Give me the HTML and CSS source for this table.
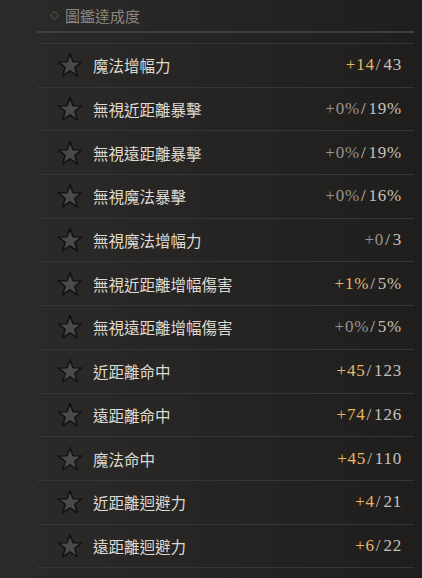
FILE: index.html
```html
<!DOCTYPE html>
<html lang="zh-Hant">
<head>
<meta charset="utf-8">
<link rel="stylesheet" href="styles.css">
</head>
<body>
<div class="panel">
  <div class="header"><span class="diamond">◇</span><span class="title">圖鑑達成度</span></div>
  <ul class="list">
    <li class="row"><svg class="star" viewBox="0 0 24 24"><polygon points="12,1.5 14.8,9 22.8,9.2 16.5,14.2 18.7,22 12,17.4 5.3,22 7.5,14.2 1.2,9.2 9.2,9"/></svg><span class="name">魔法增幅力</span><span class="val"><span class="gain">+14</span><span class="sl">/</span><span class="tot">43</span></span></li>
    <li class="row"><svg class="star" viewBox="0 0 24 24"><polygon points="12,1.5 14.8,9 22.8,9.2 16.5,14.2 18.7,22 12,17.4 5.3,22 7.5,14.2 1.2,9.2 9.2,9"/></svg><span class="name">無視近距離暴擊</span><span class="val"><span class="zero">+0%</span><span class="sl">/</span><span class="tot">19%</span></span></li>
    <li class="row"><svg class="star" viewBox="0 0 24 24"><polygon points="12,1.5 14.8,9 22.8,9.2 16.5,14.2 18.7,22 12,17.4 5.3,22 7.5,14.2 1.2,9.2 9.2,9"/></svg><span class="name">無視遠距離暴擊</span><span class="val"><span class="zero">+0%</span><span class="sl">/</span><span class="tot">19%</span></span></li>
    <li class="row"><svg class="star" viewBox="0 0 24 24"><polygon points="12,1.5 14.8,9 22.8,9.2 16.5,14.2 18.7,22 12,17.4 5.3,22 7.5,14.2 1.2,9.2 9.2,9"/></svg><span class="name">無視魔法暴擊</span><span class="val"><span class="zero">+0%</span><span class="sl">/</span><span class="tot">16%</span></span></li>
    <li class="row"><svg class="star" viewBox="0 0 24 24"><polygon points="12,1.5 14.8,9 22.8,9.2 16.5,14.2 18.7,22 12,17.4 5.3,22 7.5,14.2 1.2,9.2 9.2,9"/></svg><span class="name">無視魔法增幅力</span><span class="val"><span class="zero">+0</span><span class="sl">/</span><span class="tot">3</span></span></li>
    <li class="row"><svg class="star" viewBox="0 0 24 24"><polygon points="12,1.5 14.8,9 22.8,9.2 16.5,14.2 18.7,22 12,17.4 5.3,22 7.5,14.2 1.2,9.2 9.2,9"/></svg><span class="name">無視近距離增幅傷害</span><span class="val"><span class="gain">+1%</span><span class="sl">/</span><span class="tot">5%</span></span></li>
    <li class="row"><svg class="star" viewBox="0 0 24 24"><polygon points="12,1.5 14.8,9 22.8,9.2 16.5,14.2 18.7,22 12,17.4 5.3,22 7.5,14.2 1.2,9.2 9.2,9"/></svg><span class="name">無視遠距離增幅傷害</span><span class="val"><span class="zero">+0%</span><span class="sl">/</span><span class="tot">5%</span></span></li>
    <li class="row"><svg class="star" viewBox="0 0 24 24"><polygon points="12,1.5 14.8,9 22.8,9.2 16.5,14.2 18.7,22 12,17.4 5.3,22 7.5,14.2 1.2,9.2 9.2,9"/></svg><span class="name">近距離命中</span><span class="val"><span class="gain">+45</span><span class="sl">/</span><span class="tot">123</span></span></li>
    <li class="row"><svg class="star" viewBox="0 0 24 24"><polygon points="12,1.5 14.8,9 22.8,9.2 16.5,14.2 18.7,22 12,17.4 5.3,22 7.5,14.2 1.2,9.2 9.2,9"/></svg><span class="name">遠距離命中</span><span class="val"><span class="gain">+74</span><span class="sl">/</span><span class="tot">126</span></span></li>
    <li class="row"><svg class="star" viewBox="0 0 24 24"><polygon points="12,1.5 14.8,9 22.8,9.2 16.5,14.2 18.7,22 12,17.4 5.3,22 7.5,14.2 1.2,9.2 9.2,9"/></svg><span class="name">魔法命中</span><span class="val"><span class="gain">+45</span><span class="sl">/</span><span class="tot">110</span></span></li>
    <li class="row"><svg class="star" viewBox="0 0 24 24"><polygon points="12,1.5 14.8,9 22.8,9.2 16.5,14.2 18.7,22 12,17.4 5.3,22 7.5,14.2 1.2,9.2 9.2,9"/></svg><span class="name">近距離迴避力</span><span class="val"><span class="gain">+4</span><span class="sl">/</span><span class="tot">21</span></span></li>
    <li class="row"><svg class="star" viewBox="0 0 24 24"><polygon points="12,1.5 14.8,9 22.8,9.2 16.5,14.2 18.7,22 12,17.4 5.3,22 7.5,14.2 1.2,9.2 9.2,9"/></svg><span class="name">遠距離迴避力</span><span class="val"><span class="gain">+6</span><span class="sl">/</span><span class="tot">22</span></span></li>
  </ul>
</div>
</body>
</html>
```
FILE: styles.css
```css
html, body {
  margin: 0;
  padding: 0;
}
body {
  width: 422px;
  height: 578px;
  overflow: hidden;
  background: linear-gradient(90deg, #2d2b29 0%, #282624 40%, #201e1c 100%);
  font-family: "Noto Sans CJK TC", "Noto Sans", sans-serif;
}
.panel {
  margin-left: 37px;
  width: 377px;
}
.header {
  height: 33px;
  border-bottom: 2px solid #403e3b;
  display: flex;
  align-items: center;
  padding-left: 13px;
  box-sizing: border-box;
  color: #8a867f;
  font-size: 15px;
  margin-bottom: 10px;
}
.diamond {
  font-size: 9px;
  margin-right: 6px;
}
.list {
  list-style: none;
  margin: 0;
  padding: 0;
  border-top: 1px solid #383633;
}
.row {
  height: 42.7px;
  border-bottom: 1px solid #383633;
  display: flex;
  align-items: center;
  padding-left: 20px;
  padding-right: 12px;
}
.star {
  width: 26px;
  height: 26px;
  flex: none;
}
.star polygon {
  fill: #4c4a48;
  stroke: #141311;
  stroke-width: 1.5;
  stroke-linejoin: round;
}
.name {
  margin-left: 10px;
  color: #dedad2;
  font-size: 15.5px;
  flex: 1;
}
.val {
  font-family: "Liberation Serif", serif;
  font-size: 17px;
  letter-spacing: 0.8px;
  color: #c6c2ba;
}
.gain {
  color: #e6b865;
}
.zero {
  color: #97938c;
}
.sl {
  margin: 0 2px 0 1px;
  color: #c6c2ba;
}
.tot {
  color: #c6c2ba;
}
```
